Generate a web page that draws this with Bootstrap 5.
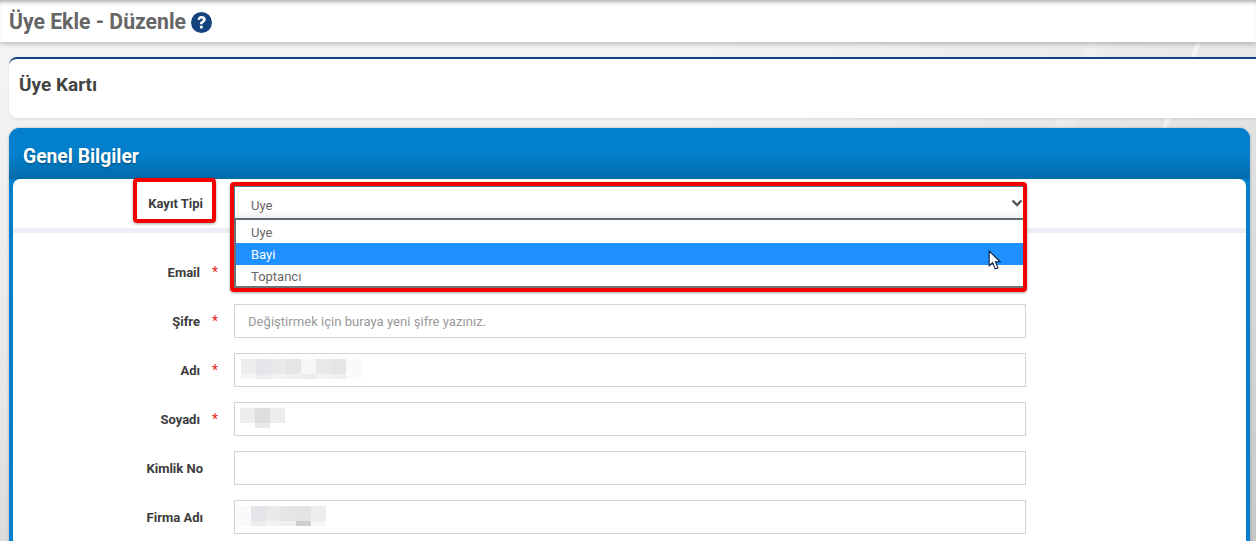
<!DOCTYPE html>
<html lang="tr">
<head>
<meta charset="utf-8">
<title>Üye Ekle - Düzenle</title>
<link href="https://cdn.jsdelivr.net/npm/bootstrap@5.3.0/dist/css/bootstrap.min.css" rel="stylesheet">
<style>
html,body{height:541px;overflow:hidden}
body{font-family:Roboto,"Liberation Sans",sans-serif;font-size:13px;color:#555;
 background:
  linear-gradient(112deg,transparent 1125px,rgba(255,255,255,.55) 1126px,rgba(255,255,255,.55) 1129px,transparent 1130px),
  linear-gradient(112deg,transparent 1025px,rgba(255,255,255,.25) 1026px,rgba(255,255,255,.1) 1045px,transparent 1046px),
  linear-gradient(180deg,rgba(255,255,255,.55) 0,rgba(255,255,255,.3) 100px,rgba(0,0,0,.03) 400px,rgba(0,0,0,.08) 541px),
  linear-gradient(90deg,#eeeeee 0,#ececec 55%,#d8d8d8 100%);}
.top-bar{height:42px;background:#fff;box-shadow:0 2px 5px rgba(0,0,0,.25),inset 0 4px 4px -2px rgba(0,0,0,.32);padding:8px 9px 0;gap:5px}
.top-title{font-size:21.200px;line-height:27px;font-weight:700;color:#666;margin:0}
.page-area{padding:15px 0 0 9px;overflow:hidden}
.head-card{height:61px;margin-right:-12px;background:#fff;border-top:2px solid #15437f;border-radius:8px 0 0 8px;box-shadow:0 1px 3px rgba(0,0,0,.1);padding:14px 10px}
.head-title{font-size:19px;line-height:23px;font-weight:700;color:#444;margin:0}
.blue-panel{margin:10px 6px 0 0;background:#0380cd;border-radius:11px 11px 0 0;padding:0 4px;height:420px;box-shadow:0 0 3px rgba(0,0,0,.25)}
.blue-head{height:51px;margin:0 -4px;padding:16px 14px 0;border-radius:11px 11px 0 0;background:linear-gradient(180deg,#0380cd 0,#0380cd 50%,#016ba9 100%)}
.blue-title{font-size:19.300px;line-height:25px;font-weight:700;color:#fff;margin:0;text-shadow:0 1px 2px rgba(0,0,0,.35)}
.white-body{position:relative;background:#fff;border-radius:7px 7px 0 0;height:369px}
.type-row{border-bottom:5px solid #eceff4;height:54px;padding-top:7px}
.field-row{height:34px;margin-bottom:15px}
.form-area{padding-top:22px}
.lbl-col{width:187px;text-align:right;font-weight:700;font-size:13px;line-height:36px;color:#3c3c3c;flex:none}
.lbl-col.no-star{width:190px}
.star-col{width:34px;flex:none;color:#e8231c;padding-left:12px;line-height:34px;font-size:14px}
.gap-col,.star-blank{width:31px;flex:none}
.fld-box{position:relative;width:792px;flex:none}
.fld-input{height:34px;border:1px solid #cfd3db;border-radius:0;padding:0 13px;font-size:13.100px;color:#555;box-shadow:none}
.fld-input::placeholder{color:#999;opacity:1}
.fld-select{height:34px;border:1px solid #557f9e;border-bottom:2px solid #5f6b73;border-radius:0;padding:6px 0 0 16px;font-size:13px;color:#666;
 background-image:url("data:image/svg+xml,%3Csvg xmlns='http://www.w3.org/2000/svg' viewBox='0 0 12 8'%3E%3Cpath d='M1.500 1.500 6 6l4.500-4.500' fill='none' stroke='%23555' stroke-width='2.400'/%3E%3C/svg%3E");
 background-position:right 2px center;background-size:12px 8px;background-color:#fff;box-shadow:inset 0 -9px 9px -8px rgba(0,0,0,.12)}
.drop-list{position:absolute;left:221px;top:41px;width:792px;height:68px;background:#fff;border:1px solid #6d7479;border-width:0 2px 2px 2px;z-index:3;padding-top:1px}
.drop-item{height:22px;line-height:24px;padding-left:15px;font-size:13px;color:#666}
.drop-item.is-hot{background:#1e90ff;color:#fff}
.hl-frame{position:absolute;border:4px solid #f40000;border-radius:4px;z-index:4;pointer-events:none;box-shadow:0 1px 3px rgba(0,0,0,.35)}
.hl-label{left:120px;top:-1px;width:83px;height:45px}
.hl-select{left:217px;top:3px;width:797px;height:110px}
.cursor-ico{position:absolute;left:975px;top:71px;z-index:5}
.blur-bits{position:absolute;top:6px;height:20px;z-index:1;display:flex}
.blur-bits i{display:block;width:15px;height:20px}
.blur-a{left:7px}.blur-b{left:6px}.blur-c{left:2px}
.tone-1{background:linear-gradient(#ededed 15px,#f6f6f6 15px)}
.tone-2{background:linear-gradient(#e4e5e8 15px,#eceded 15px)}
.tone-3{background:linear-gradient(#e9e9e9 15px,#f2f2f2 15px)}
.tone-4{background:linear-gradient(#e5e5e5 15px,#f0f0f0 15px)}
.tone-5{background:linear-gradient(#f5f6f6 15px,#ececec 15px)}
.tone-6{background:#f9fafb}
.tone-7{background:linear-gradient(#dedede 15px,#e9e9e9 15px)}
.tone-8{background:linear-gradient(#ececec 15px,#fff 15px)}
.tone-9{background:linear-gradient(#e4e4e4 15px,#cfcfcf 15px)}
</style>
</head>
<body>
<div class="top-bar d-flex align-items-start">
  <h1 class="top-title">Üye Ekle - Düzenle</h1>
  <svg width="21" height="21" viewBox="0 0 20 20" class="mt-1" aria-hidden="true"><circle cx="10" cy="10" r="10" fill="#15437f"/><path d="M6.200 7.400C6.400 5 8 3.700 10.200 3.700c2.300 0 3.900 1.400 3.900 3.300 0 1.600-1 2.400-2 3.100-.8.500-1 .9-1 1.600H8.500c-.1-1.500.4-2.300 1.500-3 .9-.6 1.300-.9 1.300-1.500s-.5-1.100-1.300-1.100-1.400.5-1.500 1.500z" fill="#fff"/><rect x="8.500" y="13" width="2.700" height="2.700" rx=".4" fill="#fff"/></svg>
</div>
<div class="page-area">
  <div class="head-card"><h2 class="head-title">Üye Kartı</h2></div>
  <div class="blue-panel">
    <div class="blue-head"><h2 class="blue-title">Genel Bilgiler</h2></div>
    <div class="white-body">
      <div class="type-row d-flex">
        <div class="lbl-col no-star">Kayıt Tipi</div>
        <div class="gap-col"></div>
        <div class="fld-box">
          <select class="form-select fld-select" aria-label="Kayıt Tipi"><option>Uye</option><option>Bayi</option><option>Toptancı</option></select>
        </div>
      </div>
      <div class="drop-list">
        <div class="drop-item">Uye</div>
        <div class="drop-item is-hot">Bayi</div>
        <div class="drop-item">Toptancı</div>
      </div>
      <div class="hl-frame hl-label"></div>
      <div class="hl-frame hl-select"></div>
      <svg class="cursor-ico" width="15" height="21" viewBox="0 0 14 20" aria-hidden="true"><path d="M1 1v14l3.300-3 2.400 6 2.700-1-2.500-5.800H11.500z" fill="#fff" stroke="#0a1a30" stroke-width="1"/></svg>
      <div class="form-area">
        <div class="field-row d-flex">
          <div class="lbl-col">Email</div><div class="star-col">*</div>
          <div class="fld-box"><input class="form-control fld-input" type="text"></div>
        </div>
        <div class="field-row d-flex">
          <div class="lbl-col">Şifre</div><div class="star-col">*</div>
          <div class="fld-box"><input class="form-control fld-input" type="text" placeholder="Değiştirmek için buraya yeni şifre yazınız."></div>
        </div>
        <div class="field-row d-flex">
          <div class="lbl-col">Adı</div><div class="star-col">*</div>
          <div class="fld-box"><input class="form-control fld-input" type="text">
            <div class="blur-bits blur-a"><i class="tone-1"></i><i class="tone-2"></i><i class="tone-3"></i><i class="tone-4"></i><i class="tone-5"></i><i class="tone-3"></i><i class="tone-4"></i><i class="tone-6"></i></div></div>
        </div>
        <div class="field-row d-flex">
          <div class="lbl-col">Soyadı</div><div class="star-col">*</div>
          <div class="fld-box"><input class="form-control fld-input" type="text">
            <div class="blur-bits blur-b"><i class="tone-8"></i><i class="tone-7"></i><i class="tone-8"></i></div></div>
        </div>
        <div class="field-row d-flex">
          <div class="lbl-col no-star">Kimlik No</div><div class="star-blank"></div>
          <div class="fld-box"><input class="form-control fld-input" type="text"></div>
        </div>
        <div class="field-row d-flex">
          <div class="lbl-col no-star">Firma Adı</div><div class="star-blank"></div>
          <div class="fld-box"><input class="form-control fld-input" type="text">
            <div class="blur-bits blur-c"><i class="tone-6"></i><i class="tone-2"></i><i class="tone-3"></i><i class="tone-4"></i><i class="tone-9"></i><i class="tone-1"></i></div></div>
        </div>
      </div>
    </div>
  </div>
</div>
<script src="https://cdn.jsdelivr.net/npm/bootstrap@5.3.0/dist/js/bootstrap.bundle.min.js"></script>
</body>
</html>
